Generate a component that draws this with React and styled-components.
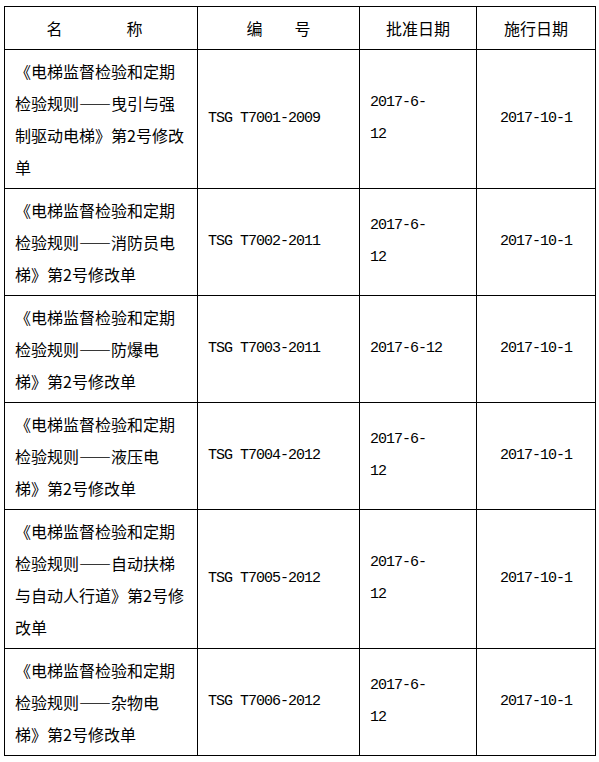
import React from "react";
import styled, { createGlobalStyle } from "styled-components";

const GlobalStyle = createGlobalStyle`
  body {
    margin: 0;
    background: #fff;
    color: #000;
    font-family: "Noto Sans CJK SC", sans-serif;
  }
`;

const Table = styled.table`
  margin: 6px 0 0 4px;
  width: 591px;
  table-layout: fixed;
  border-collapse: collapse;
  font-size: 16px;
  line-height: 32px;
`;

const Col = styled.col`
  width: ${(p) => p.$w}px;
`;

const HeadCell = styled.th`
  border: 1px solid #000;
  padding: 5px ${(p) => p.$padRight || 0}px 5px 0;
  font-weight: normal;
  text-align: center;
  white-space: pre;
`;

const Cell = styled.td`
  border: 1px solid #000;
  padding: 5px 10px;
  vertical-align: middle;
  text-align: ${(p) => p.$align || "left"};
`;

const NameText = styled.div`
  font-family: "Noto Sans CJK SC", sans-serif;
  line-break: strict;
  text-spacing-trim: space-all;
  font-feature-settings: "fwid" 0;
`;

const MonoText = styled.div`
  font-family: "Liberation Mono", monospace;
  font-size: 15px;
  letter-spacing: -1px;
  white-space: nowrap;
`;

const rows = [
  {
    name: "《电梯监督检验和定期检验规则——曳引与强制驱动电梯》第2号修改单",
    code: "TSG T7001-2009",
    approved: ["2017-6-", "12"],
  },
  {
    name: "《电梯监督检验和定期检验规则——消防员电梯》第2号修改单",
    code: "TSG T7002-2011",
    approved: ["2017-6-", "12"],
  },
  {
    name: "《电梯监督检验和定期检验规则——防爆电梯》第2号修改单",
    code: "TSG T7003-2011",
    approved: ["2017-6-12"],
  },
  {
    name: "《电梯监督检验和定期检验规则——液压电梯》第2号修改单",
    code: "TSG T7004-2012",
    approved: ["2017-6-", "12"],
  },
  {
    name: "《电梯监督检验和定期检验规则——自动扶梯与自动人行道》第2号修改单",
    code: "TSG T7005-2012",
    approved: ["2017-6-", "12"],
  },
  {
    name: "《电梯监督检验和定期检验规则——杂物电梯》第2号修改单",
    code: "TSG T7006-2012",
    approved: ["2017-6-", "12"],
  },
];

export default function App() {
  return (
    <>
      <GlobalStyle />
      <Table lang="zh-CN">
        <colgroup>
          <Col $w={193} />
          <Col $w={162} />
          <Col $w={117} />
          <Col $w={119} />
        </colgroup>
        <thead>
          <tr>
            <HeadCell $padRight={13}>名　　　　称</HeadCell>
            <HeadCell>编　　号</HeadCell>
            <HeadCell>批准日期</HeadCell>
            <HeadCell>施行日期</HeadCell>
          </tr>
        </thead>
        <tbody>
          {rows.map((row) => (
            <tr key={row.code}>
              <Cell>
                <NameText>{row.name}</NameText>
              </Cell>
              <Cell>
                <MonoText>{row.code}</MonoText>
              </Cell>
              <Cell>
                {row.approved.map((line) => (
                  <MonoText key={line}>{line}</MonoText>
                ))}
              </Cell>
              <Cell $align="center">
                <MonoText>2017-10-1</MonoText>
              </Cell>
            </tr>
          ))}
        </tbody>
      </Table>
    </>
  );
}
